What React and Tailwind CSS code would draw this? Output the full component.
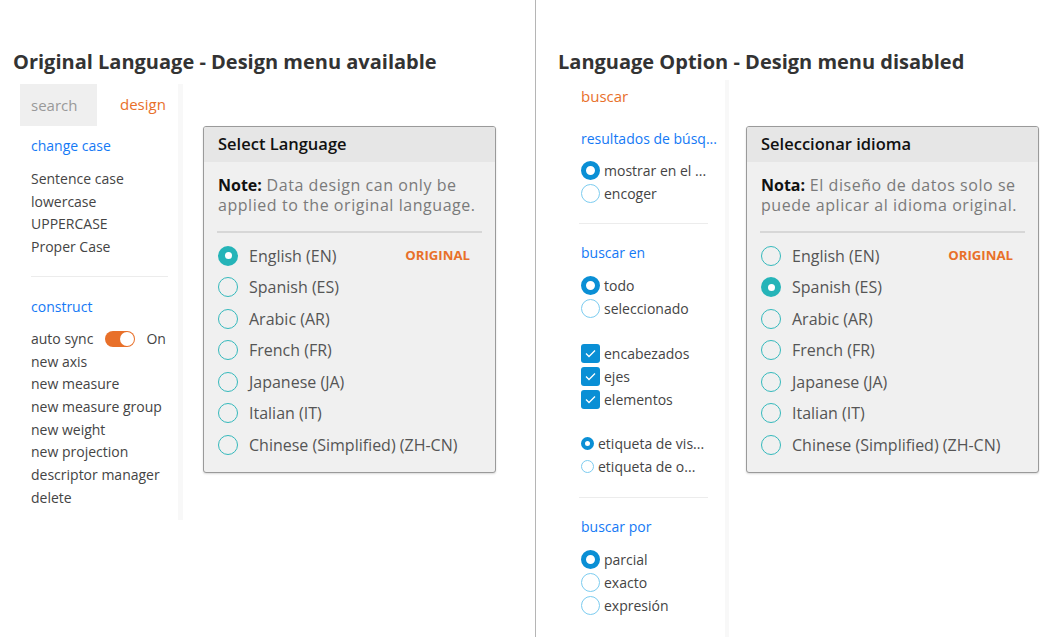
const langs = ["English (EN)", "Spanish (ES)", "Arabic (AR)", "French (FR)", "Japanese (JA)", "Italian (IT)", "Chinese (Simplified) (ZH-CN)"]

const TealRadio = ({ checked }) => (
  checked ? (
    <span className="w-[20px] h-[20px] rounded-full bg-[#25b4b8] flex items-center justify-center shrink-0">
      <span className="w-[7px] h-[7px] rounded-full bg-white" />
    </span>
  ) : (
    <span className="w-[20px] h-[20px] rounded-full border-[1.5px] border-[#35b9bc] shrink-0" />
  )
)

const LanguageDialog = ({ title, noteLabel, note, selected }) => {
  return (
    <div className="w-[293px] h-[347px] mt-[42px] border border-[#9a9a9a] rounded-[3px] bg-[#f0f0f0] shadow-[0_1px_2px_rgba(0,0,0,0.15)] overflow-hidden font-['Open_Sans',sans-serif] shrink-0">
      <div className="bg-[#e6e6e6] h-[35px] flex items-center pl-[14px] text-[16.5px] font-semibold text-[#111]">{title}</div>
      <div className="px-[13px] pt-[13px]">
        <p className="text-[16px] leading-[20px] text-[#7a7a7a] pl-[1px] tracking-[0.55px]">
          <span className="font-bold text-[#111] tracking-normal">{noteLabel}</span> {note}
        </p>
        <div className="h-[2px] bg-[#d7d7d7] mt-[16px]" />
        <div className="mt-[7px] flex flex-col">
          {langs.map((l, i) => (
            <div key={l} className="h-[31.5px] flex items-center pl-[1px]">
              <TealRadio checked={i === selected} />
              <span className="ml-[11px] text-[16px] text-[#555]">{l}</span>
              {i === 0 && <span className="ml-auto mr-[12px] text-[13.2px] font-bold text-[#e8702a]">ORIGINAL</span>}
            </div>
          ))}
        </div>
      </div>
    </div>
  )
}

const BlueRadio = ({ checked, small }) => {
  if (small) {
    return checked ? (
      <span className="w-[13px] h-[13px] rounded-full border-[4px] border-[#0a8fd5] bg-white shrink-0" />
    ) : (
      <span className="w-[13px] h-[13px] rounded-full border border-[#7cccf0] bg-white shrink-0" />
    )
  }
  return checked ? (
    <span className="w-[19px] h-[19px] rounded-full border-[5px] border-[#0a8fd5] bg-white shrink-0" />
  ) : (
    <span className="w-[19px] h-[19px] rounded-full border-[1.5px] border-[#7cccf0] bg-white shrink-0" />
  )
}

const Check = () => (
  <span className="w-[19px] h-[19px] rounded-[3px] bg-[#0a8fd5] flex items-center justify-center shrink-0">
    <svg width="11" height="9" viewBox="0 0 11 9" fill="none">
      <path d="M1 4.5L4 7.5L10 1.5" stroke="white" strokeWidth="1.3" />
    </svg>
  </span>
)

const Row = ({ children }) => <div className="h-[23px] flex items-center">{children}</div>

const App = () => {
  return (
    <div className="w-[1040px] h-[637px] flex bg-white font-['Open_Sans',sans-serif] text-[#444] overflow-hidden">
      {/* left half */}
      <div className="w-[535px] shrink-0 pt-[50px] pl-[13px]">
        <h1 className="text-[20px] leading-[24px] font-bold text-[#333]">Original Language - Design menu available</h1>
        <div className="flex mt-[10px] pl-[7px]">
          <div className="w-[163px] h-[436px] border-r-[5px] border-[#f8f8f8] text-[14px] shrink-0">
            <div className="flex h-[42px] items-center">
              <div className="w-[77px] h-full bg-[#efefef] flex items-center pl-[11px] text-[15px] text-[#999]">search</div>
              <div className="pl-[23px] text-[15px] text-[#e8702a] -mt-[2px]">design</div>
            </div>
            <div className="pl-[11px]">
              <div className="mt-[10px] h-[20px] leading-[20px] text-[#1479f5]">change case</div>
              <div className="mt-[12px] leading-[22.7px]">
                <div>Sentence case</div>
                <div>lowercase</div>
                <div>UPPERCASE</div>
                <div>Proper Case</div>
              </div>
              <div className="mt-[17px] w-[137px] h-px bg-[#ececec]" />
              <div className="mt-[20px] h-[20px] leading-[20px] text-[#1479f5]">construct</div>
              <div className="mt-[11px] leading-[22.7px]">
                <div className="flex items-center">
                  <span>auto sync</span>
                  <span className="ml-[12px] w-[30px] h-[16px] rounded-full bg-[#e8702a] flex items-center justify-end pr-[1px]">
                    <span className="w-[14px] h-[14px] rounded-full bg-white" />
                  </span>
                  <span className="ml-[11px]">On</span>
                </div>
                <div>new axis</div>
                <div>new measure</div>
                <div>new measure group</div>
                <div>new weight</div>
                <div>new projection</div>
                <div>descriptor manager</div>
                <div>delete</div>
              </div>
            </div>
          </div>
          <div className="ml-[20px]">
            <LanguageDialog
              title="Select Language"
              noteLabel="Note:"
              note="Data design can only be applied to the original language."
              selected={0}
            />
          </div>
        </div>
      </div>

      {/* divider */}
      <div className="w-px h-full bg-[#b5b5b5] shrink-0" />

      {/* right half */}
      <div className="flex-1 pt-[50px] pl-[22px]">
        <h1 className="text-[20px] leading-[24px] font-bold text-[#333]">Language Option - Design menu disabled</h1>
        <div className="flex mt-[6px] pl-[12px]">
          <div className="w-[159px] h-[560px] border-r-[4px] border-[#f8f8f8] text-[14px] shrink-0 pl-[11px]">
            <div className="pt-[6px] h-[20px] leading-[20px] text-[15px] text-[#e8702a] box-content">buscar</div>
            <div className="mt-[23px] h-[20px] leading-[20px] text-[#1479f5]">resultados de búsq...</div>
            <div className="mt-[10px]">
              <Row><BlueRadio checked /><span className="ml-[4px]">mostrar en el ...</span></Row>
              <Row><BlueRadio /><span className="ml-[4px]">encoger</span></Row>
            </div>
            <div className="mt-[18px] -ml-[2px] w-[129px] h-px bg-[#ececec]" />
            <div className="mt-[19px] h-[20px] leading-[20px] text-[#1479f5]">buscar en</div>
            <div className="mt-[11px]">
              <Row><BlueRadio checked /><span className="ml-[4px]">todo</span></Row>
              <Row><BlueRadio /><span className="ml-[4px]">seleccionado</span></Row>
            </div>
            <div className="mt-[22px]">
              <Row><Check /><span className="ml-[4px]">encabezados</span></Row>
              <Row><Check /><span className="ml-[4px]">ejes</span></Row>
              <Row><Check /><span className="ml-[4px]">elementos</span></Row>
            </div>
            <div className="mt-[21px]">
              <Row><BlueRadio checked small /><span className="ml-[4px]">etiqueta de vis...</span></Row>
              <Row><BlueRadio small /><span className="ml-[4px]">etiqueta de o...</span></Row>
            </div>
            <div className="mt-[19px] -ml-[2px] w-[129px] h-px bg-[#ececec]" />
            <div className="mt-[19px] h-[20px] leading-[20px] text-[#1479f5]">buscar por</div>
            <div className="mt-[11px]">
              <Row><BlueRadio checked /><span className="ml-[4px]">parcial</span></Row>
              <Row><BlueRadio /><span className="ml-[4px]">exacto</span></Row>
              <Row><BlueRadio /><span className="ml-[4px]">expresión</span></Row>
            </div>
          </div>
          <div className="ml-[17px] pt-[4px]">
            <LanguageDialog
              title="Seleccionar idioma"
              noteLabel="Nota:"
              note="El diseño de datos solo se puede aplicar al idioma original."
              selected={1}
            />
          </div>
        </div>
      </div>
    </div>
  )
}

export default App
